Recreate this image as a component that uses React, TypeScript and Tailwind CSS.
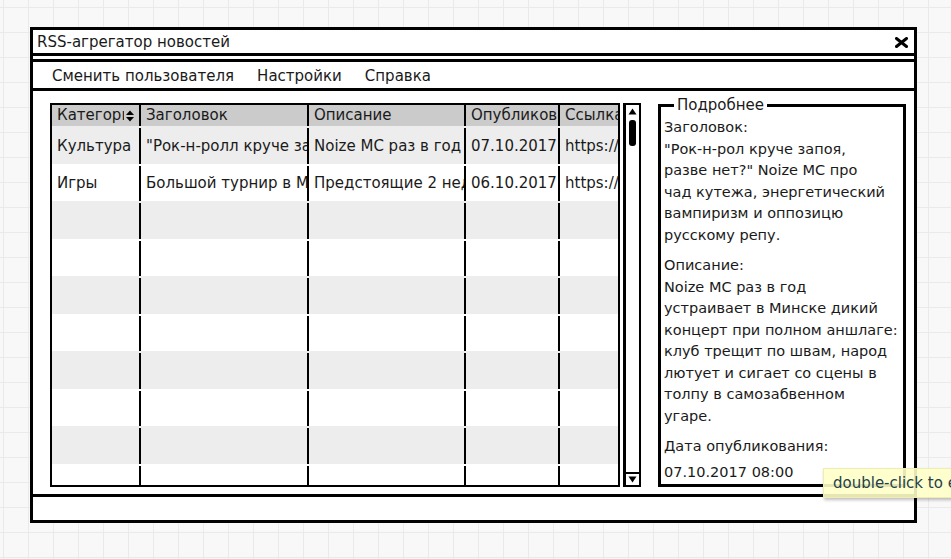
import React from "react";

const font = "font-['DejaVu_Sans',sans-serif]";

const columns = [
  { title: "Категория", width: "w-[89px]", sort: true },
  { title: "Заголовок", width: "w-[168px]" },
  { title: "Описание", width: "w-[157px]" },
  { title: "Опубликовано", width: "w-[94px]" },
  { title: "Ссылка", width: "w-[58px]", last: true },
];

const rows = [
  ["Культура", "\"Рок-н-ролл круче запоя, разве нет?\"", "Noize MC раз в год устраивает", "07.10.2017", "https://"],
  ["Игры", "Большой турнир в Минске", "Предстоящие 2 недели", "06.10.2017", "https://"],
];

const detailTitle = [
  "Заголовок:",
  "\"Рок-н-рол круче запоя,",
  "разве нет?\" Noize MC про",
  "чад кутежа, энергетический",
  "вампиризм и оппозицю",
  "русскому репу.",
];

const detailDesc = [
  "Описание:",
  "Noize MC раз в год",
  "устраивает в Минске дикий",
  "концерт при полном аншлаге:",
  "клуб трещит по швам, народ",
  "лютует и сигает со сцены в",
  "толпу в самозабвенном",
  "угаре.",
];

const SortIcon = () => (
  <svg width="10" height="12" viewBox="0 0 10 12" className="shrink-0">
    <path d="M1 5 L5 0.5 L9 5 Z" fill="#000" />
    <path d="M1 7 L5 11.5 L9 7 Z" fill="#000" />
  </svg>
);

const Table: React.FC = () => {
  const bodyRows = Array.from({ length: 10 }, (_, i) => rows[i] || ["", "", "", "", ""]);
  return (
    <div className="w-[570px] h-[384px] border-2 border-black bg-white overflow-hidden">
      {/* header */}
      <div className="flex h-[21px] bg-[#cbcbcb]">
        {columns.map((c) => (
          <div
            key={c.title}
            className={`${c.width} shrink-0 flex items-center pl-[5px] overflow-hidden whitespace-nowrap ${c.last ? "" : "border-r-2 border-black"}`}
          >
            <span className="overflow-hidden flex-1">{c.title}</span>
            {c.sort && (
              <span className="bg-[#cbcbcb] pr-[4px] pl-[1px]">
                <SortIcon />
              </span>
            )}
          </div>
        ))}
      </div>
      {bodyRows.map((r, i) => (
        <div key={i} className={`flex h-[37.5px] pt-[2px] ${i % 2 === 0 ? "bg-[#ededed]" : "bg-white"}`}>
          {columns.map((c, j) => (
            <div
              key={c.title}
              className={`${c.width} shrink-0 flex items-center pl-[5px] overflow-hidden whitespace-nowrap ${c.last ? "" : "border-r-2 border-black"}`}
            >
              {r[j]}
            </div>
          ))}
        </div>
      ))}
    </div>
  );
};

const ScrollBar: React.FC = () => (
  <div className="w-[18px] h-[384px] border-2 border-l-[3px] border-black bg-white flex flex-col items-center">
    <div className="w-full h-[12px] flex items-center justify-center">
      <svg width="9" height="7" viewBox="0 0 9 7">
        <path d="M0.5 6.5 L4.5 0.5 L8.5 6.5 Z" fill="#000" />
      </svg>
    </div>
    <div className="mt-[3px] w-[7px] h-[26px] rounded-[3px] bg-black" />
    <div className="flex-1" />
    <div className="w-full h-[13px] border-t-2 border-black flex items-center justify-center">
      <svg width="9" height="7" viewBox="0 0 9 7">
        <path d="M0.5 0.5 L4.5 6.5 L8.5 0.5 Z" fill="#000" />
      </svg>
    </div>
  </div>
);

const Details: React.FC = () => (
  <fieldset className="w-[248px] min-w-0 h-[390px] -mt-[6px] border-[3px] border-black bg-white px-[3px] pt-[4px] overflow-hidden text-[14.5px]">
    <legend className="ml-[10px] px-[3px] leading-[16px] bg-white text-[15px]">Подробнее</legend>
    <div className="leading-[21.5px] whitespace-nowrap">
      {detailTitle.map((l) => (
        <div key={l}>{l}</div>
      ))}
    </div>
    <div className="mt-[9px] leading-[21.5px] whitespace-nowrap">
      {detailDesc.map((l) => (
        <div key={l}>{l}</div>
      ))}
    </div>
    <div className="mt-[9px] leading-[21.5px]">Дата опубликования:</div>
    <div className="mt-[4px] leading-[21.5px]">07.10.2017 08:00</div>
  </fieldset>
);

export default function App() {
  return (
    <div
      className={`relative w-[951px] h-[559px] overflow-hidden bg-[#f8f8f8] bg-[linear-gradient(to_right,#eaeaea_1px,transparent_1px),linear-gradient(to_bottom,#eaeaea_1px,transparent_1px)] [background-size:25px_25px] [background-position:3px_7px] pt-[27px] pl-[30px] text-[15px] text-[#1a1a1a] ${font}`}
    >
      {/* Window */}
      <div className="w-[887px] h-[496px] border-[3px] border-black bg-white flex flex-col">
        {/* Title bar */}
        <div className="h-[26px] pt-[2px] border-b-[3px] border-black flex items-center justify-between pl-[4px] pr-[6px]">
          <span>RSS-агрегатор новостей</span>
          <svg width="13" height="11" viewBox="0 0 13 11">
            <path d="M1.5 1.5 L11.5 9.5 M11.5 1.5 L1.5 9.5" stroke="#000" strokeWidth="3" strokeLinecap="round" />
          </svg>
        </div>
        <div className="h-[3px]" />
        {/* Menu bar */}
        <div className="h-[32px] pt-[3px] border-y-[3px] border-black flex items-center gap-[23px] pl-[19px]">
          <span>Сменить пользователя</span>
          <span>Настройки</span>
          <span>Справка</span>
        </div>
        {/* Content */}
        <div className="h-[403px] flex items-start pl-[17px] pt-[12px]">
          <Table />
          <div className="ml-[3px]">
            <ScrollBar />
          </div>
          <div className="ml-[17px]">
            <Details />
          </div>
        </div>
        {/* Status bar */}
        <div className="flex-1 border-t-[3px] border-black" />
      </div>

      {/* Tooltip */}
      <div className="absolute left-[823px] top-[468px] h-[30px] w-[150px] bg-[#ffffc8]/90 border border-[#eeeeb0] shadow-[1px_2px_3px_rgba(0,0,0,0.25)] flex items-center pl-[9px] text-[15px] text-[#23404a] whitespace-nowrap">
        double-click to edit
      </div>
    </div>
  );
}
